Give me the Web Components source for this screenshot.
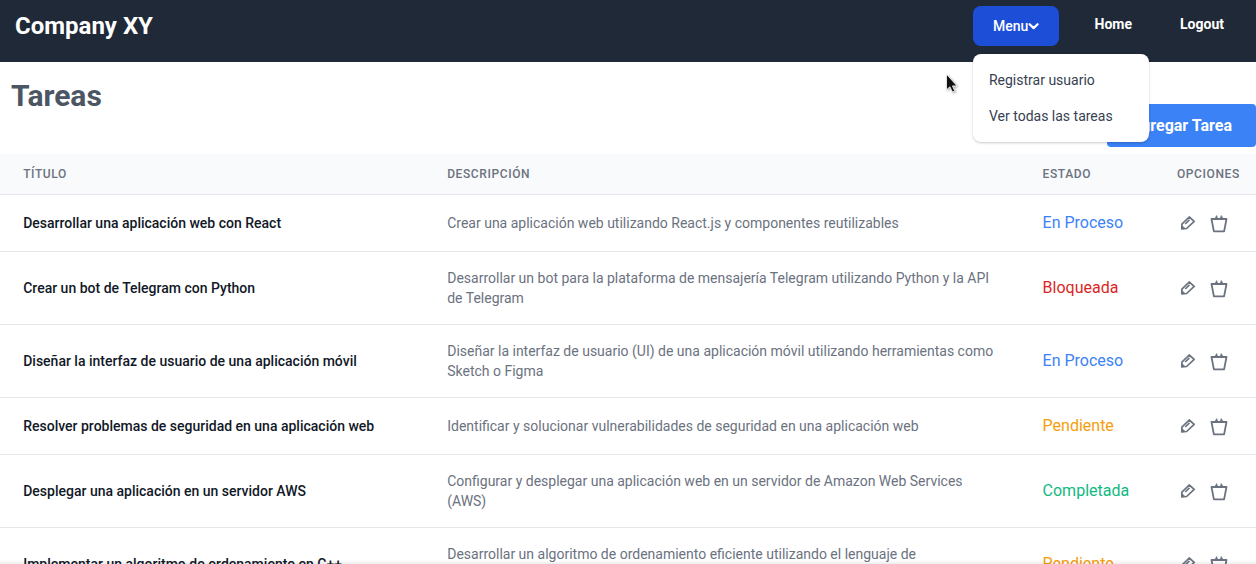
<!DOCTYPE html>
<html lang="es">
<head>
<meta charset="utf-8">
<title>Tareas</title>
<style>
html,body{margin:0;height:100%;overflow:hidden;background:#fff}
body{font-family:Roboto,"Liberation Sans",sans-serif;font-size:16px;line-height:24px;color:#111827}
</style>
</head>
<body>
<task-app></task-app>
<script>
function define(name, html, setup) {
  const template = document.createElement('template');
  template.innerHTML = html;
  customElements.define(name, class extends HTMLElement {
    connectedCallback() {
      if (this.shadowRoot) return;
      const root = this.attachShadow({ mode: 'open' });
      root.append(template.content.cloneNode(true));
      if (setup) setup(this, root);
    }
  });
}

define('menu-dropdown', `
<style>
:host{display:block;position:relative;width:86px;height:40px}
button{font:500 14px/20px Roboto,sans-serif;color:#fff;background:#1d4ed8;border:0;border-radius:8px;width:86px;height:40px;padding:0 18px 0 20px;display:flex;align-items:center;white-space:nowrap}
svg{display:block;flex:none;margin-left:-1px}
.panel{position:absolute;left:0;top:48px;width:176px;height:88px;box-sizing:border-box;padding:8px 0;background:#fff;border-radius:8px;box-shadow:0 1px 3px rgba(0,0,0,.14),0 1px 2px rgba(0,0,0,.08);z-index:5}
</style>
<button><slot name="label"></slot><svg width="13" height="12" viewBox="0 0 13 12" fill="none" stroke="#fff" stroke-width="2.2" stroke-linecap="round" stroke-linejoin="round"><path d="M2.6 4.2l4 3.9 4-3.9"/></svg></button>
<div class="panel"><slot></slot></div>`);

define('menu-item', `
<style>:host{display:block;padding:8px 16px;font-size:14px;line-height:20px;color:#374151;white-space:nowrap}</style><slot></slot>`);

define('nav-link', `
<style>:host{display:block;font-weight:700;font-size:14px;line-height:20px;color:#fff}</style><slot></slot>`);

define('app-header', `
<style>
:host{display:flex;box-sizing:border-box;height:62px;background:#1f2937;padding:6px 32px 0 15px;align-items:flex-start;color:#fff}
.brand{font-weight:700;font-size:24px;line-height:32px;margin-top:4px;margin-right:auto}
menu-dropdown{margin-right:35.6px}
nav-link{margin-top:8px}
nav-link + nav-link{margin-left:48px}
</style>
<div class="brand">Company XY</div>
<menu-dropdown><span slot="label">Menu</span><menu-item>Registrar usuario</menu-item><menu-item>Ver todas las tareas</menu-item></menu-dropdown>
<nav-link>Home</nav-link><nav-link>Logout</nav-link>`);

define('page-heading', `
<style>
:host{display:flex;height:92px;justify-content:space-between;align-items:flex-start}
h1{margin:16px 0 0 11px;font-size:30px;line-height:36px;font-weight:700;color:#4b5563}
button{margin-top:42px;width:149px;height:43px;border:0;border-radius:4px;background:#3b82f6;color:#fff;font:700 16px/24px Roboto,sans-serif;padding:0 24px 0 0;text-align:right;white-space:nowrap}
</style>
<h1>Tareas</h1><button>Agregar Tarea</button>`);

define('status-label', `
<style>
:host{display:block;color:#3b82f6}
:host([kind="Bloqueada"]){color:#dc2626}
:host([kind="Pendiente"]){color:#f59e0b}
:host([kind="Completada"]){color:#10b981}
</style><slot></slot>`);

define('row-actions', `
<style>
:host{display:flex;height:24px;align-items:center}
svg{display:block;fill:none;stroke:#6b7280}
</style>
<svg width="22" height="24" viewBox="0 0 22 24" stroke-width="1.7" stroke-linejoin="round"><path d="M4.9 13.2L12.2 6l5 4.4-7.6 7.1-4.8.4z"/><path d="M8.2 13l4.2-4.1"/><path d="M4.6 13.6l4.2 4.2-4.3.4z" fill="#6b7280" stroke="none"/><path d="M6.2 14.6l1.7 1.7" stroke="#fff" stroke-width="1"/></svg>
<svg style="margin-left:10px" width="22" height="24" viewBox="0 0 22 24" stroke-width="1.8" stroke-linejoin="round"><path d="M2.5 8h15L15.1 20.3H4.9z"/><path d="M6 7.2L7.7 4.4l1 2.8zM11.2 7.2l1-2.8L14 7.2z" fill="#6b7280" stroke-width=".5"/></svg>`);

define('task-row', `
<style>
:host{display:grid;grid-template-columns:423.2px 595.4px 134.4px 1fr;align-items:center;box-sizing:border-box;min-height:57px;padding:16px 0;border-bottom:1px solid #e5e7eb}
.t{padding-left:23.2px;font-size:14px;line-height:20px;font-weight:500;color:#111827;white-space:nowrap}
.d{padding:0 24px;font-size:14px;line-height:20px;color:#6b7280}
status-label,row-actions{margin-left:24px}
</style>
<div class="t"></div><div class="d"><slot></slot></div><status-label></status-label><row-actions></row-actions>`,
(host, root) => {
  root.querySelector('.t').textContent = host.getAttribute('name');
  const status = root.querySelector('status-label');
  status.setAttribute('kind', host.getAttribute('status'));
  status.textContent = host.getAttribute('status');
});

define('task-table', `
<style>
:host{display:block}
.head{display:grid;grid-template-columns:423.2px 595.4px 134.4px 1fr;box-sizing:border-box;height:41px;padding:12px 0;background:#f9fafb;border-bottom:1px solid #e5e7eb;font-size:12px;line-height:16px;font-weight:500;letter-spacing:.6px;color:#6b7280}
.head span{padding-left:24px}
.head span:first-child{padding-left:23.2px}
</style>
<div class="head"><span>TÍTULO</span><span>DESCRIPCIÓN</span><span>ESTADO</span><span>OPCIONES</span></div>
<slot></slot>`);

define('mouse-pointer', `
<style>:host{position:absolute;left:945px;top:73px;z-index:9}svg{display:block;filter:drop-shadow(1px 1px 1px rgba(0,0,0,.35))}</style>
<svg width="14" height="21" viewBox="0 0 14 21"><path d="M1.5 1.2v15.6l3.4-3 2.5 5.2 2.4-1.1-2.4-5h4.6z" fill="#111" stroke="#fff" stroke-width=".8"/></svg>`);

define('task-app', `
<style>
:host{display:block;position:relative;height:564px;overflow:hidden}
.fade{position:absolute;left:0;right:0;bottom:0;height:4px;background:linear-gradient(rgba(0,0,0,0),rgba(0,0,0,.07))}
</style>
<app-header></app-header>
<page-heading></page-heading>
<task-table>
<task-row name="Desarrollar una aplicación web con React" status="En Proceso">Crear una aplicación web utilizando React.js y componentes reutilizables</task-row>
<task-row name="Crear un bot de Telegram con Python" status="Bloqueada">Desarrollar un bot para la plataforma de mensajería Telegram utilizando Python y la API de Telegram</task-row>
<task-row name="Diseñar la interfaz de usuario de una aplicación móvil" status="En Proceso">Diseñar la interfaz de usuario (UI) de una aplicación móvil utilizando herramientas como Sketch o Figma</task-row>
<task-row name="Resolver problemas de seguridad en una aplicación web" status="Pendiente">Identificar y solucionar vulnerabilidades de seguridad en una aplicación web</task-row>
<task-row name="Desplegar una aplicación en un servidor AWS" status="Completada">Configurar y desplegar una aplicación web en un servidor de Amazon Web Services (AWS)</task-row>
<task-row name="Implementar un algoritmo de ordenamiento en C++" status="Pendiente">Desarrollar un algoritmo de ordenamiento eficiente utilizando el lenguaje de programación C++</task-row>
</task-table>
<div class="fade"></div>
<mouse-pointer></mouse-pointer>`);
</script>
</body>
</html>
